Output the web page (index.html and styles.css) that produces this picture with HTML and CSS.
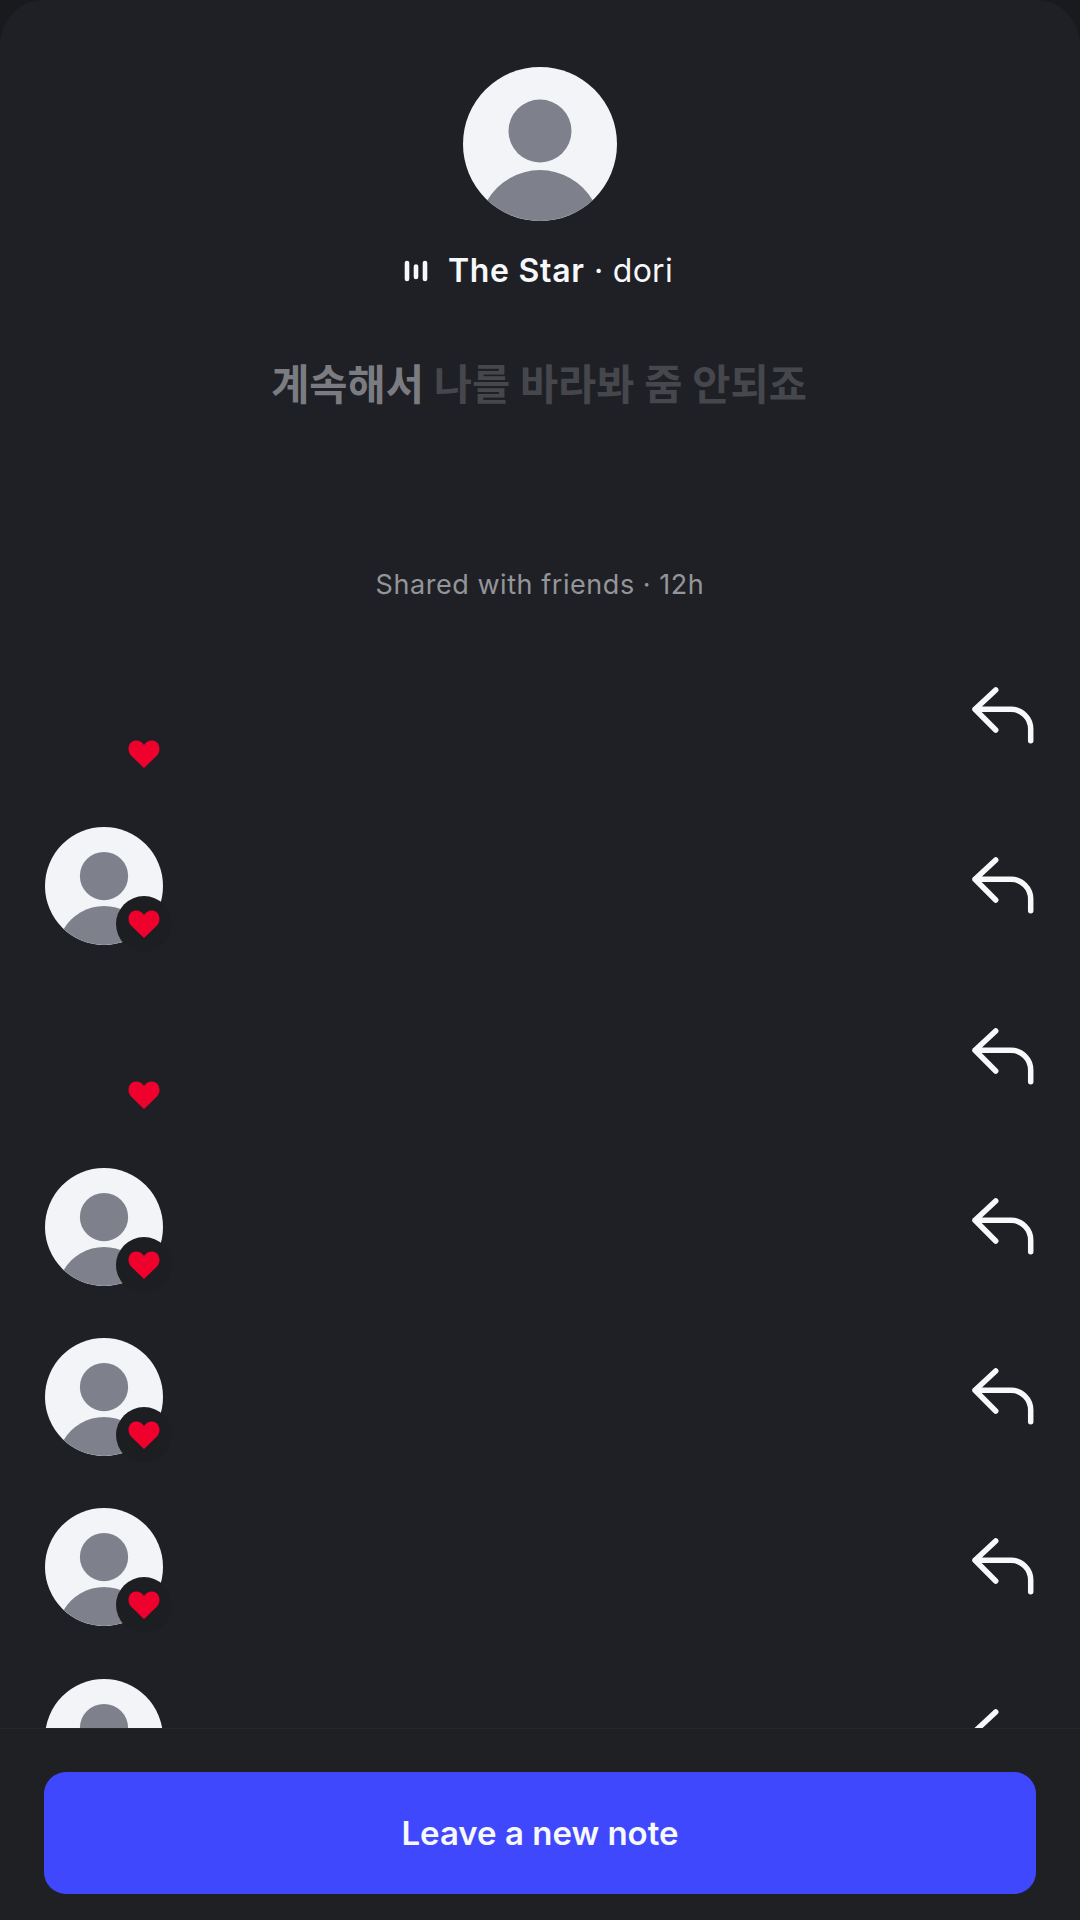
FILE: index.html
```html
<!DOCTYPE html>
<html lang="en">
<head>
<meta charset="utf-8">
<title>Note</title>
<link rel="stylesheet" href="styles.css">
</head>
<body>
<svg class="sprite" xmlns="http://www.w3.org/2000/svg">
  <symbol id="person" viewBox="0 0 154 154">
    <circle cx="77" cy="77" r="77" fill="#f2f4f8"/>
    <circle cx="77" cy="64" r="31.5" fill="#7e818b"/>
    <path d="M24.4 133.2A61 61 0 0 1 129.6 133.2A77 77 0 0 1 24.4 133.2Z" fill="#7e818b"/>
  </symbol>
  <symbol id="heart" viewBox="0 0 32 28">
    <path d="M16 28L3 15.5C-2 9.500 1 .5 8 .5C11.500 .5 14.500 2.500 16 5C17.500 2.500 20.500 .5 24 .5C31 .5 34 9.500 29 15.500Z" fill="#f0002c"/>
  </symbol>
  <symbol id="reply" viewBox="0 0 64 64">
    <path d="M25.700 6L5 25.300L25.700 46M5 25.300H41A19.700 19.700 0 0 1 60.700 45V56.700" fill="none" stroke="#f7f8fa" stroke-width="5.500" stroke-linecap="round" stroke-linejoin="round"/>
  </symbol>
</svg>
<main class="sheet">
  <header class="note">
    <svg class="note-avatar"><use href="#person"/></svg>
    <p class="song">
      <svg class="bars" viewBox="0 0 24 22"><path d="M3 3V19M12 6.500V17M21 3V19" fill="none" stroke="#f7f8fa" stroke-width="4.600" stroke-linecap="round"/></svg>
      <span class="song-title">The Star</span><span class="song-artist"> · dori</span>
    </p>
    <p class="lyric"><span class="lyric-on">계속해서</span> 나를 바라봐 줌 안되죠</p>
    <p class="meta">Shared with friends · 12h</p>
  </header>
  <ul class="rows">
    <li class="row">
      <div class="face"><svg class="badge-heart badge-heart--bare"><use href="#heart"/></svg></div>
      <svg class="reply"><use href="#reply"/></svg>
    </li>
    <li class="row">
      <div class="face"><svg class="face-img"><use href="#person"/></svg><span class="badge"><svg class="badge-heart"><use href="#heart"/></svg></span></div>
      <svg class="reply"><use href="#reply"/></svg>
    </li>
    <li class="row">
      <div class="face"><svg class="badge-heart badge-heart--bare"><use href="#heart"/></svg></div>
      <svg class="reply"><use href="#reply"/></svg>
    </li>
    <li class="row">
      <div class="face"><svg class="face-img"><use href="#person"/></svg><span class="badge"><svg class="badge-heart"><use href="#heart"/></svg></span></div>
      <svg class="reply"><use href="#reply"/></svg>
    </li>
    <li class="row">
      <div class="face"><svg class="face-img"><use href="#person"/></svg><span class="badge"><svg class="badge-heart"><use href="#heart"/></svg></span></div>
      <svg class="reply"><use href="#reply"/></svg>
    </li>
    <li class="row">
      <div class="face"><svg class="face-img"><use href="#person"/></svg><span class="badge"><svg class="badge-heart"><use href="#heart"/></svg></span></div>
      <svg class="reply"><use href="#reply"/></svg>
    </li>
    <li class="row">
      <div class="face"><svg class="face-img"><use href="#person"/></svg><span class="badge"><svg class="badge-heart"><use href="#heart"/></svg></span></div>
      <svg class="reply"><use href="#reply"/></svg>
    </li>
  </ul>
  <footer class="footer">
    <button class="cta" type="button">Leave a new note</button>
  </footer>
</main>
</body>
</html>
```

FILE: styles.css
```css
* { box-sizing: border-box; }
html, body { margin: 0; padding: 0; }
body {
  width: 1080px;
  height: 1920px;
  background: #191a1e;
  overflow: hidden;
  font-family: Inter, "Noto Sans CJK KR", sans-serif;
}
.sprite { display: none; }
.sheet {
  height: 1920px;
  display: flex;
  flex-direction: column;
  background: #1f2025;
  border-radius: 44px 44px 0 0;
  overflow: hidden;
}
.note {
  display: flex;
  flex-direction: column;
  align-items: center;
  padding-top: 67px;
  flex: none;
}
.note-avatar { width: 154px; height: 154px; display: block; }
.song {
  display: flex;
  align-items: center;
  margin: 30px 3px 0 0;
  height: 40px;
  font-size: 32px;
  line-height: 40px;
  color: #f7f8fa;
  white-space: pre;
}
.bars { width: 24px; height: 22px; margin-right: 20px; }
.song-title { font-weight: 600; letter-spacing: .7px; }
.song-artist { font-weight: 400; letter-spacing: .3px; }
.lyric {
  margin: 70px 2px 0 0;
  height: 48px;
  font-family: Inter, "Noto Sans CJK KR", sans-serif;
  font-size: 41.500px;
  line-height: 48px;
  font-weight: 700;
  color: #46474c;
}
.lyric-on { color: #7b7c81; }
.meta {
  margin: 159px 0 0;
  height: 34px;
  font-size: 27px;
  line-height: 34px;
  color: #94959a;
  letter-spacing: .55px;
}
.rows {
  list-style: none;
  margin: 0;
  padding: 55px 46px 0 45px;
  flex: 1;
  min-height: 0;
  overflow: hidden;
  display: flex;
  flex-direction: column;
  gap: 52.300px;
}
.row {
  flex: none;
  height: 118px;
  display: flex;
  align-items: center;
  justify-content: space-between;
}
.face { position: relative; width: 118px; height: 118px; }
.face-img { width: 118px; height: 118px; display: block; }
.badge {
  position: absolute;
  left: 71px;
  top: 69px;
  width: 56px;
  height: 56px;
  border-radius: 50%;
  background: #1d1e22;
  display: flex;
  align-items: center;
  justify-content: center;
}
.badge-heart { width: 32px; height: 28px; display: block; }
.badge-heart--bare { position: absolute; left: 83px; top: 83px; }
.reply { width: 64px; height: 64px; display: block; }
.footer {
  flex: none;
  height: 192px;
  border-top: 1px solid #26272c;
  background: #1f2024;
  padding: 43px 44px 26px;
}
.cta {
  display: block;
  width: 100%;
  height: 122px;
  border: 0;
  border-radius: 22px;
  background: #4048fe;
  color: #f7f8fa;
  font: 600 33px Inter, sans-serif;
}
```
